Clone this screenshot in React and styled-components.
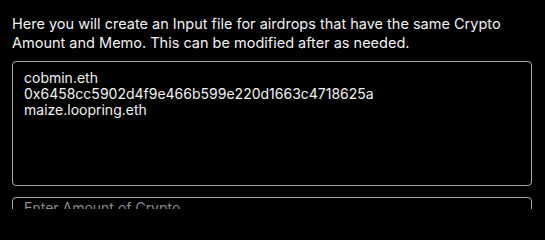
import React, { useState } from "react";
import styled, { createGlobalStyle } from "styled-components";

const GlobalStyle = createGlobalStyle`
  html, body {
    margin: 0;
    background: #000;
  }
  body {
    font-family: Inter, "Noto Sans", sans-serif;
    color: #f2f2f2;
  }
`;

const Page = styled.div`
  padding: 14px 12px 0 12px;
  width: 545px;
  box-sizing: border-box;
  height: 209px;
  overflow: hidden;
  display: flex;
  flex-direction: column;
`;

const Intro = styled.p`
  margin: 0 0 9px 0;
  font-size: 14.5px;
  line-height: 19px;
  color: #f2f2f2;
  flex-shrink: 0;
`;

const Field = styled.textarea`
  display: block;
  flex-shrink: 0;
  width: 520px;
  height: 125px;
  box-sizing: border-box;
  background: #000;
  color: #f2f2f2;
  border: 1px solid #a8a8a8;
  border-radius: 4px;
  padding: 8px 11px;
  font-family: Inter, "Noto Sans", sans-serif;
  font-size: 14px;
  line-height: 16px;
  resize: none;
  outline: none;
  margin: 0 0 ${(p) => p.$gap || 0}px 0;
`;

const AmountInput = styled.input`
  display: block;
  flex-shrink: 0;
  width: 520px;
  box-sizing: border-box;
  background: #000;
  color: #f2f2f2;
  border: 1px solid #a8a8a8;
  border-radius: 4px;
  padding: 1px 11px 14px;
  font-family: Inter, "Noto Sans", sans-serif;
  font-size: 14px;
  line-height: 17px;
  outline: none;
  &::placeholder {
    color: #8c8c8c;
  }
`;

export default function App() {
  const [list, setList] = useState(
    "cobmin.eth\n0x6458cc5902d4f9e466b599e220d1663c4718625a\nmaize.loopring.eth"
  );
  return (
    <>
      <GlobalStyle />
      <Page>
        <Intro>
          Here you will create an Input file for airdrops that have the same Crypto
          Amount and Memo. This can be modified after as needed.
        </Intro>
        <Field $gap={11} value={list} onChange={(e) => setList(e.target.value)} />
        <AmountInput placeholder="Enter Amount of Crypto" />
      </Page>
    </>
  );
}
